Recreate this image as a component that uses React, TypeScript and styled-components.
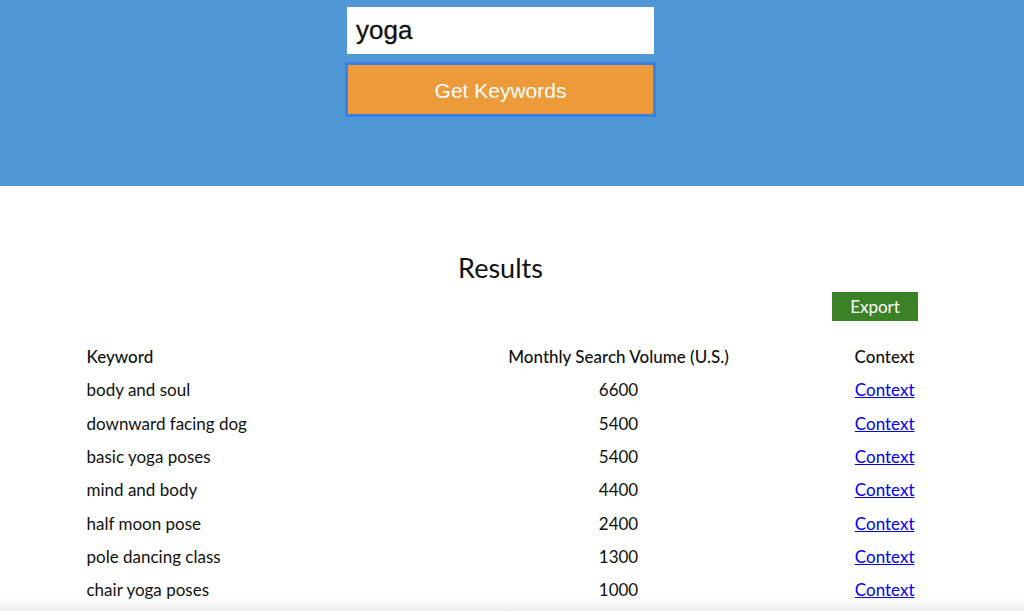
import React from "react";
import styled, { createGlobalStyle } from "styled-components";

const Global = createGlobalStyle`
  html, body { margin: 0; padding: 0; background: #fff; }
  body { font-family: Lato, "Open Sans", sans-serif; color: #111; overflow: hidden; }
`;

const Header = styled.header`
  background: #5097d5;
  height: 186px;
  width: 100%;
`;

const HeaderInner = styled.div`
  width: 1001px;
  display: flex;
  flex-direction: column;
  align-items: center;
  padding-top: 7px;
  gap: 8px;
`;

const SearchInput = styled.input`
  box-sizing: border-box;
  width: 307px;
  height: 47px;
  border: none;
  background: #fff;
  padding: 0 9px;
  font-family: "Liberation Sans", Arial, sans-serif;
  font-size: 26px;
  color: #111;
  outline: none;
  -webkit-text-stroke: 0.3px #111;
`;

const SubmitButton = styled.button`
  box-sizing: border-box;
  width: 311px;
  height: 55px;
  background: #ec9a3a;
  border: 3px solid #3a80ea;
  color: #fff;
  font-family: "Liberation Sans", Arial, sans-serif;
  font-size: 21px;
  padding-top: 3px;
  cursor: pointer;
`;

const Main = styled.main`
  width: 1001px;
  display: flex;
  flex-direction: column;
  align-items: center;
  padding-top: 65px;
`;

const Title = styled.h2`
  margin: 0;
  font-weight: 400;
  font-size: 27px;
  line-height: 34px;
`;

const ExportRow = styled.div`
  width: 835px;
  display: flex;
  justify-content: flex-end;
  margin-top: 7px;
`;

const ExportButton = styled.button`
  width: 86px;
  height: 29px;
  border: none;
  background: #3b8226;
  color: #fff;
  font-family: Lato, "Open Sans", sans-serif;
  font-size: 17px;
  padding: 0;
`;

const Table = styled.div`
  width: 828px;
  margin-top: 20px;
  display: grid;
  grid-template-columns: 421px 222px 185px;
  grid-auto-rows: 33.3px;
  align-items: center;
  font-size: 17px;
`;

const Cell = styled.div<{ $align?: "left" | "center" | "right"; $head?: boolean }>`
  text-align: ${(p) => p.$align ?? "left"};
  color: #111;
  font-weight: ${(p) => (p.$head ? 500 : 400)};
  white-space: nowrap;
  padding-bottom: 2px;
`;

const ContextLink = styled.a`
  color: #0000ee;
  text-decoration: underline;
`;

const Fade = styled.div`
  position: fixed;
  left: 0;
  right: 0;
  bottom: 0;
  height: 14px;
  background: linear-gradient(to bottom, rgba(240,240,240,0), rgba(236,236,236,0.9));
  pointer-events: none;
`;

const rows: [string, number][] = [
  ["body and soul", 6600],
  ["downward facing dog", 5400],
  ["basic yoga poses", 5400],
  ["mind and body", 4400],
  ["half moon pose", 2400],
  ["pole dancing class", 1300],
  ["chair yoga poses", 1000],
];

export default function App() {
  return (
    <>
      <Global />
      <Header>
        <HeaderInner>
          <SearchInput defaultValue="yoga" />
          <SubmitButton>Get Keywords</SubmitButton>
        </HeaderInner>
      </Header>
      <Main>
        <Title>Results</Title>
        <ExportRow>
          <ExportButton>Export</ExportButton>
        </ExportRow>
        <Table>
          <Cell $head>Keyword</Cell>
          <Cell $head $align="center">Monthly Search Volume (U.S.)</Cell>
          <Cell $head $align="right">Context</Cell>
          {rows.map(([k, v], i) => (
            <React.Fragment key={i}>
              <Cell>{k}</Cell>
              <Cell $align="center">{v}</Cell>
              <Cell $align="right">
                <ContextLink href="#">Context</ContextLink>
              </Cell>
            </React.Fragment>
          ))}
        </Table>
      </Main>
      <Fade />
    </>
  );
}
